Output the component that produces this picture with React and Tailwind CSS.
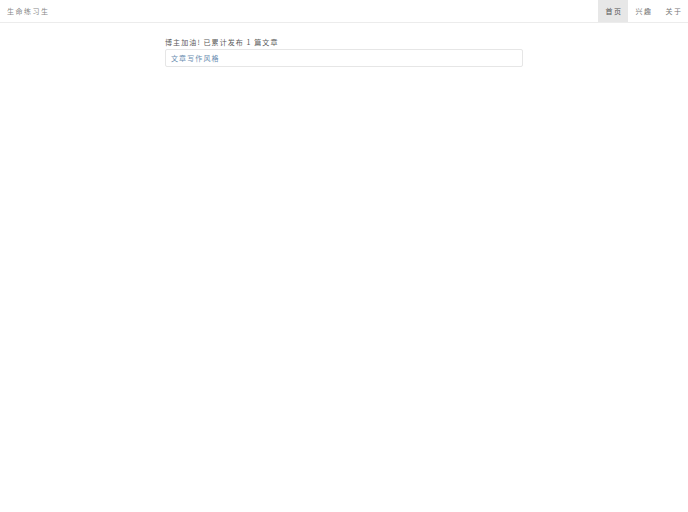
export default function App() {
  const font = { fontFamily: '"Noto Sans CJK SC", "Noto Sans", sans-serif' };
  return (
    <div className="min-h-[512px] bg-white" style={font}>
      {/* Top bar */}
      <header className="flex h-[23px] items-stretch justify-between border-b border-[#ececec]">
        <a className="flex items-center pl-[7px] text-[7px] tracking-[1.5px] text-[#888]">生命练习生</a>
        <nav className="flex items-stretch text-[7px] tracking-[1.5px] text-[#777]">
          <a className="flex w-[30px] items-center justify-center bg-[#e7e7e7] pl-[2px] text-[#555]">首页</a>
          <a className="flex w-[30px] items-center justify-center pl-[2px]">兴趣</a>
          <a className="flex w-[30px] items-center justify-center pl-[2px]">关于</a>
        </nav>
      </header>

      {/* Content */}
      <main className="mx-auto w-[358px] pt-[13px]">
        <p className="text-[7px] leading-[12px] tracking-[1.1px] text-[#5a5a5a]">博主加油! 已累计发布 1 篇文章</p>
        <div className="mt-[1px] flex h-[18px] items-center rounded-[2px] border border-[#e6e6e6] px-[5px] text-[7px] tracking-[1.1px] text-[#6a8db0]">
          文章写作风格
        </div>
      </main>
    </div>
  );
}
